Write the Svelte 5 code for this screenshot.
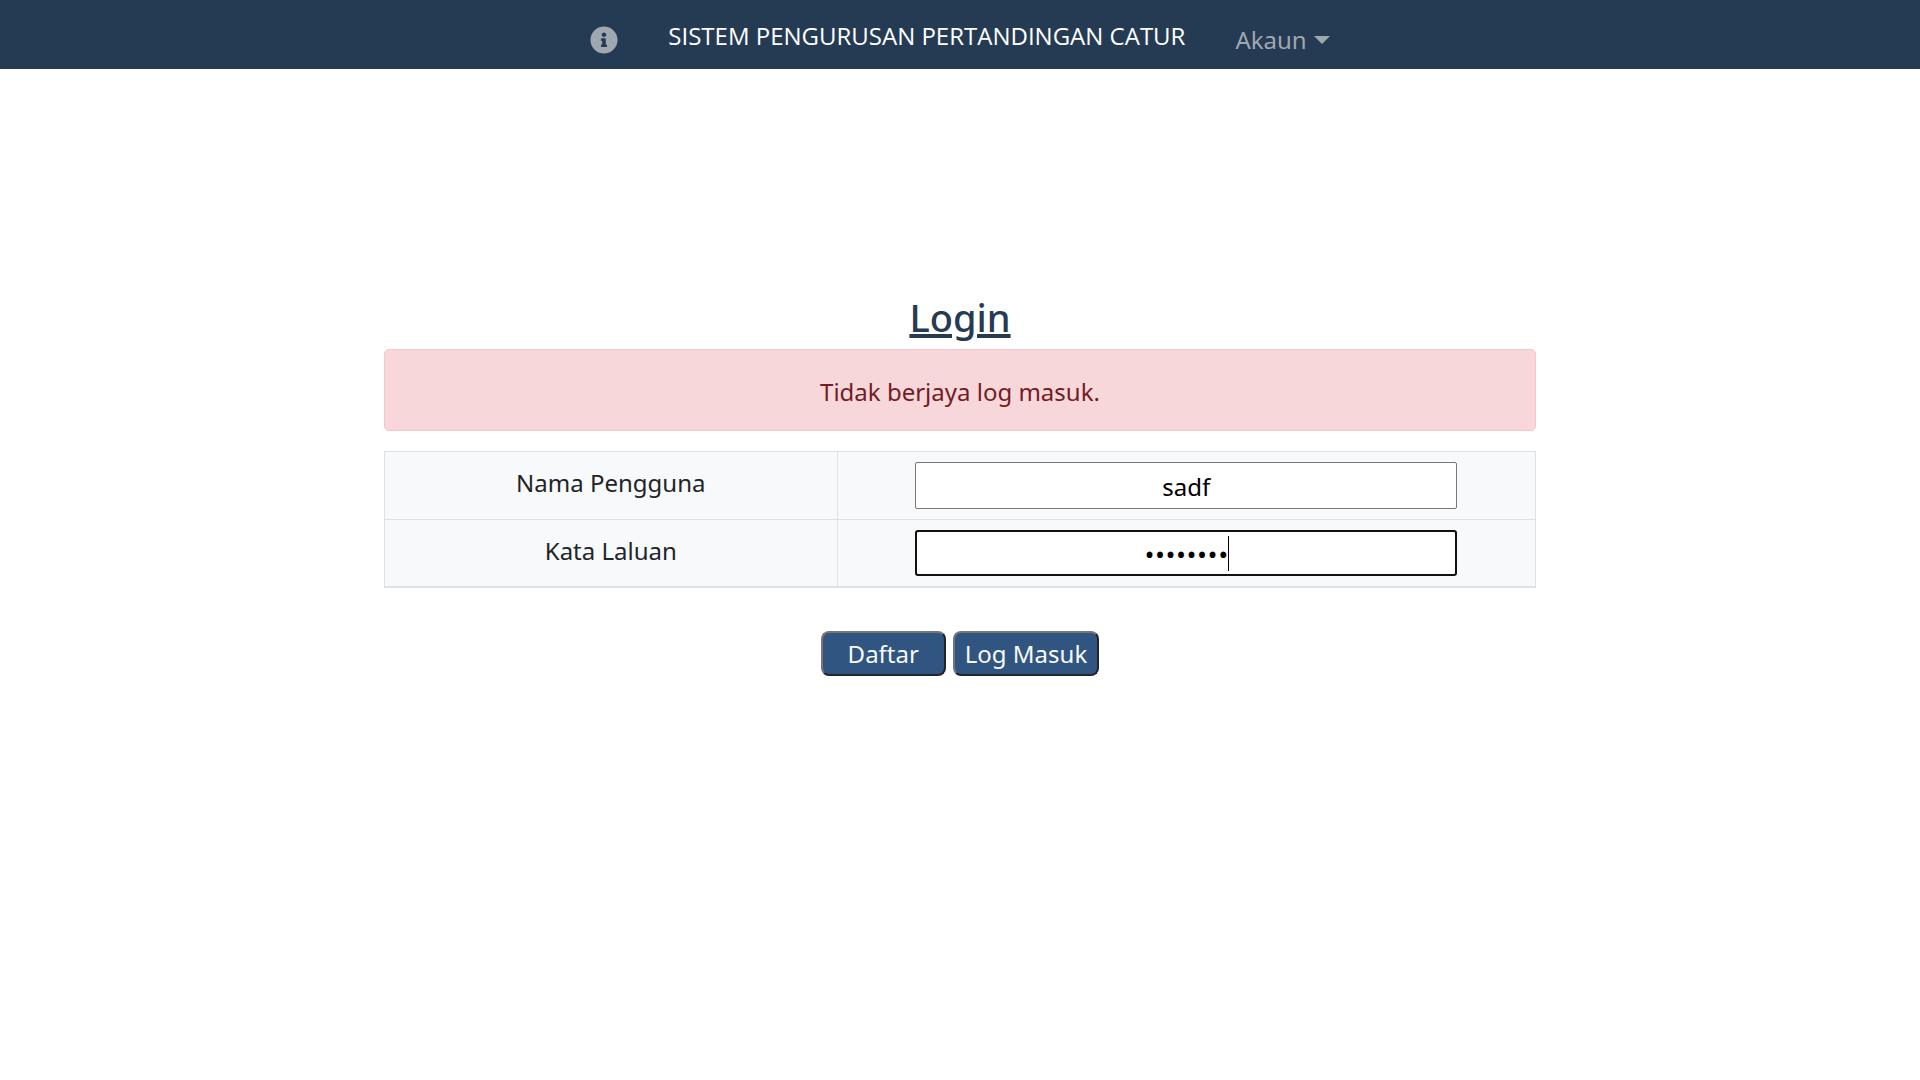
<script>
  let username = $state('sadf');
  let password = $state('sadfsadf');
</script>

<header class="navbar">
  <nav class="nav" aria-label="Utama">
    <a class="nav-link" href="#info" aria-label="Maklumat">
      <svg class="info" viewBox="0 0 512 512" aria-hidden="true">
        <path
          fill="currentColor"
          d="M256 8C119.043 8 8 119.083 8 256c0 136.997 111.043 248 248 248s248-111.003 248-248C504 119.083 392.957 8 256 8zm0 110c23.196 0 42 18.804 42 42s-18.804 42-42 42-42-18.804-42-42 18.804-42 42-42zm56 254c0 6.627-5.373 12-12 12h-88c-6.627 0-12-5.373-12-12v-24c0-6.627 5.373-12 12-12h12v-64h-12c-6.627 0-12-5.373-12-12v-24c0-6.627 5.373-12 12-12h64c6.627 0 12 5.373 12 12v100h12c6.627 0 12 5.373 12 12v24z"
        />
      </svg>
    </a>
    <a class="brand" href="#utama">SISTEM PENGURUSAN PERTANDINGAN CATUR</a>
    <button class="nav-link account" type="button" aria-haspopup="true">Akaun</button>
  </nav>
</header>

<main class="page">
  <h1>Login</h1>
  <div class="alert" role="alert">Tidak berjaya log masuk.</div>
  <form onsubmit={(e) => e.preventDefault()}>
    <table>
      <tbody>
        <tr>
          <td class="label-cell"><label for="username">Nama Pengguna</label></td>
          <td>
            <div class="field">
              <input id="username" type="text" autocomplete="off" bind:value={username} />
            </div>
          </td>
        </tr>
        <tr>
          <td class="label-cell"><label for="password">Kata Laluan</label></td>
          <td>
            <div class="field">
              <input id="password" class="active" type="password" autocomplete="off" bind:value={password} />
              <span class="caret" aria-hidden="true"></span>
            </div>
          </td>
        </tr>
      </tbody>
    </table>
    <div class="actions">
      <button class="action register" type="button">Daftar</button>
      <button class="action" type="submit">Log Masuk</button>
    </div>
  </form>
</main>

<style>
  :global(body) {
    margin: 0;
    background: #fff;
    color: #212529;
    font-family: 'Segoe UI', 'Noto Sans', 'Open Sans', sans-serif;
    font-size: 24px;
    line-height: 36px;
  }

  .navbar {
    display: flex;
    justify-content: center;
    box-sizing: border-box;
    min-height: 69px;
    padding-top: 18px;
    background: #253b53;
  }

  .nav {
    display: flex;
    align-items: flex-start;
    gap: 50px;
  }

  .brand {
    color: #fff;
    font-family: 'Segoe UI', 'Open Sans', sans-serif;
    text-decoration: none;
    white-space: nowrap;
  }

  .nav-link {
    display: flex;
    align-items: center;
    height: 36px;
    margin-top: 4px;
    padding: 0;
    border: 0;
    background: none;
    color: #9fa7b1;
    font: inherit;
  }

  .info {
    display: block;
    width: 28px;
    height: 28px;
  }

  .account {
    gap: 7px;
  }

  .account::after {
    content: '';
    border: 8px solid transparent;
    border-top-color: currentColor;
    border-bottom: 0;
  }

  .page {
    width: 60%;
    margin: 0 auto;
    padding-top: 224px;
    text-align: center;
  }

  h1 {
    margin: 0 0 8px;
    color: #253b53;
    font-size: 38px;
    font-weight: 500;
    line-height: 48px;
    text-decoration: underline;
    text-decoration-thickness: 4px;
    text-underline-offset: 2px;
  }

  .alert {
    margin-bottom: 20px;
    padding: 25px 24px 22px;
    border: 1px solid #f5c6cb;
    border-radius: 5px;
    background: #f8d7da;
    color: #721c24;
    line-height: 33px;
  }

  table {
    width: 100%;
    border-collapse: collapse;
    border-bottom: 2px solid #dee2e6;
    background: #f8f9fa;
    table-layout: fixed;
  }

  td {
    padding: 10px;
    border: 1px solid #dee2e6;
    vertical-align: top;
  }

  .label-cell {
    width: 37.5%;
  }

  .label-cell label {
    line-height: 42px;
  }

  .field {
    position: relative;
    width: 80%;
    margin: 0 auto;
  }

  input {
    display: block;
    box-sizing: border-box;
    width: 100%;
    height: 47px;
    padding: 3px 2px 2px;
    border: 1px solid #767676;
    border-radius: 2px;
    outline: none;
    background: #fff;
    color: #000;
    font: inherit;
    text-align: center;
  }

  input.active {
    height: 46px;
    border: 2px solid #101010;
    border-radius: 3px;
    caret-color: transparent;
    font-family: 'Open Sans', sans-serif;
    font-size: 28px;
  }

  .caret {
    position: absolute;
    top: 6px;
    left: calc(50% + 42px);
    width: 1px;
    height: 35px;
    background: #000;
  }

  .actions {
    display: flex;
    justify-content: center;
    gap: 7px;
    margin-top: 43px;
  }

  .action {
    box-sizing: border-box;
    height: 45px;
    padding: 1px 10px 0;
    border: 2px solid;
    border-color: #767676 #212529 #212529 #767676;
    border-radius: 8px;
    background: #2f5580;
    color: #f8f9fa;
    font: inherit;
  }

  .register {
    width: 125px;
  }
</style>
